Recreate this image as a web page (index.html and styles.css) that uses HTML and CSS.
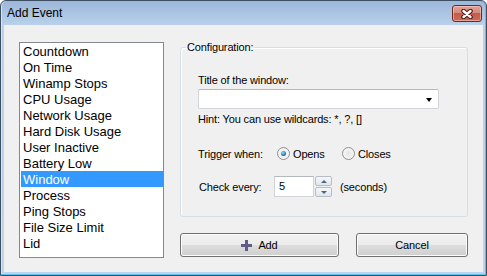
FILE: index.html
```html
<!DOCTYPE html>
<html>
  <head>
    <meta charset="UTF-8">
    <title>Add Event</title>
    <link rel="stylesheet" href="styles.css">
  </head>
  <body>
    <div class="window">
      <div class="titlebar">
        <span class="title">Add Event</span>
        <span class="close-btn">
          <svg width="14" height="10" viewBox="0 0 14 10">
            <path d="M3.5 2 L10.5 8 M10.5 2 L3.5 8" stroke="#4a1a16" stroke-width="4.5" stroke-linecap="round"/>
            <path d="M3.5 2 L10.5 8 M10.5 2 L3.5 8" stroke="#ffffff" stroke-width="2.4" stroke-linecap="round"/>
          </svg>
        </span>
      </div>
      <div class="client">
        <ul class="event-list">
          <li>Countdown</li>
          <li>On Time</li>
          <li>Winamp Stops</li>
          <li>CPU Usage</li>
          <li>Network Usage</li>
          <li>Hard Disk Usage</li>
          <li>User Inactive</li>
          <li>Battery Low</li>
          <li class="selected">Window</li>
          <li>Process</li>
          <li>Ping Stops</li>
          <li>File Size Limit</li>
          <li>Lid</li>
        </ul>
        <div class="settings">
          <fieldset class="config">
            <legend>Configuration:</legend>
            <div class="config-body">
              <div class="field-label">Title of the window:</div>
              <div class="combo"><span class="combo-arrow"></span></div>
              <div class="hint">Hint: You can use wildcards: *, ?, []</div>
              <div class="row trigger-row">
                <span class="row-label trigger-label">Trigger when:</span>
                <span class="radio-item opens"><span class="radio checked"></span>Opens</span>
                <span class="radio-item"><span class="radio"></span>Closes</span>
              </div>
              <div class="row check-row">
                <span class="row-label check-label">Check every:</span>
                <span class="num-box">5</span>
                <span class="spinner">
                  <span class="spin-btn"><span class="spin-up"></span></span>
                  <span class="spin-btn"><span class="spin-down"></span></span>
                </span>
                <span class="unit">(seconds)</span>
              </div>
            </div>
          </fieldset>
          <div class="buttons">
            <button class="btn btn-add">
              <svg width="11" height="11" viewBox="0 0 11 11">
                <polygon points="4,0 7,0 7,4 11,4 11,7 7,7 7,11 4,11 4,7 0,7 0,4 4,4" fill="#5f5d86"/>
              </svg>
              Add
            </button>
            <button class="btn btn-cancel">Cancel</button>
          </div>
        </div>
      </div>
    </div>
  </body>
</html>
```

FILE: styles.css
```css
body {
  margin: 0;
  background: #ffffff;
  font-family: "Liberation Sans", Arial, sans-serif;
}
.window {
  width: 487px;
  height: 276px;
  box-sizing: border-box;
  border: 1px solid #3f4f62;
  border-radius: 6px 6px 0 0;
  background: linear-gradient(#9cb7d9, #b9d1ea 24px, #bcd4ec);
  box-shadow: inset 0 -1px 0 #5cc3ee, inset -1px 0 0 #5cc3ee, inset 1px 0 0 #d6e5f4;
  display: flex;
  flex-direction: column;
  overflow: hidden;
}
.titlebar {
  height: 24px;
  box-sizing: border-box;
  display: flex;
  align-items: flex-start;
  padding: 4px 4px 0 6px;
}
.title {
  font-size: 12px;
  line-height: 16px;
  color: #000;
}
.close-btn {
  margin-left: auto;
  width: 30px;
  height: 17px;
  box-sizing: border-box;
  border: 1px solid #6b2a25;
  border-radius: 3px;
  background: linear-gradient(#e2a195 0%, #d58a7c 45%, #c65b4b 50%, #cc6a58 100%);
  box-shadow: inset 0 0 0 1px rgba(255, 220, 210, 0.5);
  display: flex;
  align-items: center;
  justify-content: center;
}
.client {
  flex: 1;
  margin: 0 3px 3px 3px;
  background: #f0f0f0;
  display: flex;
  align-items: flex-start;
  padding: 16px 0 0 15px;
}
.event-list {
  list-style: none;
  margin: 1px 0 0 0;
  padding: 0;
  width: 145px;
  height: 216px;
  box-sizing: border-box;
  border: 1px solid #828790;
  background: #ffffff;
  font-size: 13px;
  color: #000;
}
.event-list li {
  height: 16px;
  box-sizing: border-box;
  padding-top: 1px;
  line-height: 15px;
  margin-left: 1px;
  padding-left: 2px;
}
.event-list li.selected {
  background: #3399ff;
  color: #ffffff;
}
.settings {
  margin-left: 16px;
  width: 288px;
  font-size: 11px;
  letter-spacing: -0.15px;
  color: #000;
}
.config {
  width: 288px;
  box-sizing: border-box;
  margin: 0;
  padding: 20px 0 19px 5px;
  border: 1px solid #d5dfe5;
  border-radius: 3px;
  box-shadow: inset 1px 1px 0 #ffffff;
  min-width: 0;
}
.config legend {
  padding: 0 1px;
  line-height: 13px;
}
.config-body {
  padding-left: 12px;
}
.field-label,
.hint {
  line-height: 13px;
}
.combo {
  margin-top: 2px;
  width: 241px;
  height: 20px;
  box-sizing: border-box;
  border: 1px solid #d0d3d8;
  border-top-color: #b5b8be;
  border-radius: 2px;
  background: #ffffff;
  display: flex;
  align-items: center;
  justify-content: flex-end;
  padding-right: 6px;
}
.combo-arrow {
  width: 0;
  height: 0;
  border-left: 3.5px solid transparent;
  border-right: 3.5px solid transparent;
  border-top: 4px solid #000;
  margin-top: 1px;
}
.hint {
  margin-top: 4px;
}
.row {
  display: flex;
  align-items: center;
}
.trigger-row {
  margin-top: 21px;
  height: 13px;
}
.trigger-label {
  width: 79px;
}
.radio-item {
  display: flex;
  align-items: center;
  gap: 3px;
}
.radio-item.opens {
  width: 65px;
}
.radio {
  width: 13px;
  height: 13px;
  box-sizing: border-box;
  border-radius: 50%;
  border: 1px solid #8e8f8f;
  background: radial-gradient(circle at 50% 50%, #e6e6e6, #f6f6f6 70%, #dcdcdc);
  display: flex;
  align-items: center;
  justify-content: center;
}
.radio.checked::after {
  content: "";
  width: 5px;
  height: 5px;
  border-radius: 50%;
  background: radial-gradient(circle at 40% 35%, #a8dcf9, #2b7fc0 55%, #0f4a80);
}
.check-row {
  margin-top: 16px;
  margin-left: 1px;
}
.check-label {
  width: 75px;
}
.num-box {
  width: 40px;
  height: 21px;
  box-sizing: border-box;
  border: 1px solid #d0d3d8;
  border-top-color: #b5b8be;
  background: #ffffff;
  padding-left: 4px;
  line-height: 19px;
}
.spinner {
  margin-left: 1px;
  display: flex;
  flex-direction: column;
  gap: 1px;
}
.spin-btn {
  width: 17px;
  height: 10px;
  box-sizing: border-box;
  border: 1px solid #b7bdc6;
  border-radius: 2px;
  background: linear-gradient(#f6f8fa, #e1e6ec);
  display: flex;
  align-items: center;
  justify-content: center;
}
.spin-up {
  width: 0;
  height: 0;
  border-left: 3px solid transparent;
  border-right: 3px solid transparent;
  border-bottom: 3px solid #4d6287;
}
.spin-down {
  width: 0;
  height: 0;
  border-left: 3px solid transparent;
  border-right: 3px solid transparent;
  border-top: 3px solid #4d6287;
}
.unit {
  margin-left: 8px;
}
.buttons {
  margin-top: 16px;
  display: flex;
  gap: 17px;
}
.btn {
  height: 24px;
  box-sizing: border-box;
  border: 1px solid #707070;
  border-radius: 3px;
  background: linear-gradient(#f2f2f2 0%, #ebebeb 50%, #dddddd 50%, #cfcfcf 100%);
  box-shadow: inset 0 0 0 1px #fbfbfb;
  font-family: "Liberation Sans", Arial, sans-serif;
  font-size: 11px;
  letter-spacing: -0.15px;
  color: #000;
  padding: 0;
  display: flex;
  align-items: center;
  justify-content: center;
  gap: 6px;
}
.btn-add {
  width: 159px;
}
.btn-cancel {
  width: 112px;
}
```
